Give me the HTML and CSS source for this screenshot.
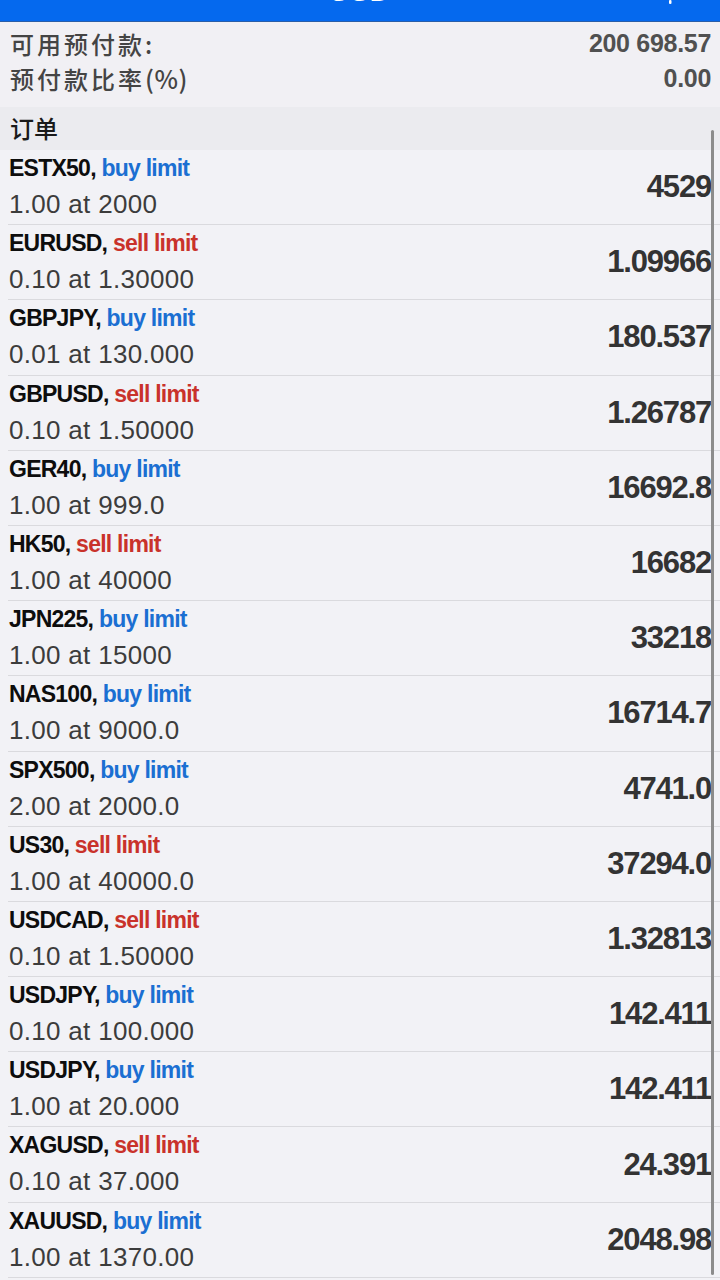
FILE: index.html
```html
<!DOCTYPE html>
<html lang="zh-CN">
<head>
<meta charset="utf-8">
<title>订单</title>
<link rel="stylesheet" href="styles.css">
</head>
<body>
<div class="screen">
  <header class="topbar">
    <span class="topbar-side"></span>
    <span class="topbar-title">USD</span>
    <span class="topbar-side topbar-right"><svg class="topbar-icon" width="6" height="8" viewBox="0 0 6 8"><rect x="2" y="0" width="2.5" height="4" rx="1" fill="#fff"/></svg></span>
  </header>

  <section class="balance">
    <div class="balance-row"><span class="balance-label">可用预付款:</span><span class="balance-value">200 698.57</span></div>
    <div class="balance-row"><span class="balance-label">预付款比率<span class="balance-unit">(%)</span></span><span class="balance-value">0.00</span></div>
  </section>

  <div class="section-head">订单</div>

  <ul class="orders">
    <li class="order"><div class="order-main"><div class="order-title">ESTX50, <span class="buy">buy limit</span></div><div class="order-sub">1.00 at 2000</div></div><div class="order-price">4529</div></li>
    <li class="order"><div class="order-main"><div class="order-title">EURUSD, <span class="sell">sell limit</span></div><div class="order-sub">0.10 at 1.30000</div></div><div class="order-price">1.09966</div></li>
    <li class="order"><div class="order-main"><div class="order-title">GBPJPY, <span class="buy">buy limit</span></div><div class="order-sub">0.01 at 130.000</div></div><div class="order-price">180.537</div></li>
    <li class="order"><div class="order-main"><div class="order-title">GBPUSD, <span class="sell">sell limit</span></div><div class="order-sub">0.10 at 1.50000</div></div><div class="order-price">1.26787</div></li>
    <li class="order"><div class="order-main"><div class="order-title">GER40, <span class="buy">buy limit</span></div><div class="order-sub">1.00 at 999.0</div></div><div class="order-price">16692.8</div></li>
    <li class="order"><div class="order-main"><div class="order-title">HK50, <span class="sell">sell limit</span></div><div class="order-sub">1.00 at 40000</div></div><div class="order-price">16682</div></li>
    <li class="order"><div class="order-main"><div class="order-title">JPN225, <span class="buy">buy limit</span></div><div class="order-sub">1.00 at 15000</div></div><div class="order-price">33218</div></li>
    <li class="order"><div class="order-main"><div class="order-title">NAS100, <span class="buy">buy limit</span></div><div class="order-sub">1.00 at 9000.0</div></div><div class="order-price">16714.7</div></li>
    <li class="order"><div class="order-main"><div class="order-title">SPX500, <span class="buy">buy limit</span></div><div class="order-sub">2.00 at 2000.0</div></div><div class="order-price">4741.0</div></li>
    <li class="order"><div class="order-main"><div class="order-title">US30, <span class="sell">sell limit</span></div><div class="order-sub">1.00 at 40000.0</div></div><div class="order-price">37294.0</div></li>
    <li class="order"><div class="order-main"><div class="order-title">USDCAD, <span class="sell">sell limit</span></div><div class="order-sub">0.10 at 1.50000</div></div><div class="order-price">1.32813</div></li>
    <li class="order"><div class="order-main"><div class="order-title">USDJPY, <span class="buy">buy limit</span></div><div class="order-sub">0.10 at 100.000</div></div><div class="order-price">142.411</div></li>
    <li class="order"><div class="order-main"><div class="order-title">USDJPY, <span class="buy">buy limit</span></div><div class="order-sub">1.00 at 20.000</div></div><div class="order-price">142.411</div></li>
    <li class="order"><div class="order-main"><div class="order-title">XAGUSD, <span class="sell">sell limit</span></div><div class="order-sub">0.10 at 37.000</div></div><div class="order-price">24.391</div></li>
    <li class="order"><div class="order-main"><div class="order-title">XAUUSD, <span class="buy">buy limit</span></div><div class="order-sub">1.00 at 1370.00</div></div><div class="order-price">2048.98</div></li>
  </ul>

  <div class="scrollbar"></div>
</div>
</body>
</html>
```
FILE: styles.css
```css
html, body {
  margin: 0;
  padding: 0;
}
body {
  background: #f2f2f6;
  font-family: "Liberation Sans", Arial, "Noto Sans CJK SC", sans-serif;
}
.screen {
  position: relative;
  width: 720px;
  height: 1280px;
  overflow: hidden;
  background: #f2f2f6;
}
.topbar {
  height: 22px;
  background: #0569ee;
  border-bottom: 1px solid #2a5ea8;
  box-sizing: border-box;
  display: grid;
  grid-template-columns: 1fr auto 1fr;
  align-items: start;
  overflow: hidden;
}
.topbar-title {
  color: #ffffff;
  font-weight: bold;
  font-size: 28px;
  line-height: 28px;
  margin-top: -22px;
  letter-spacing: 1px;
}
.topbar-right {
  display: flex;
  justify-content: flex-end;
  padding-right: 47px;
}
.topbar-icon {
  display: block;
}
.balance {
  background: #f1f0f4;
  padding: 4px 9px 11px 10px;
}
.balance-row {
  display: flex;
  justify-content: space-between;
  align-items: center;
  height: 35px;
}
.balance-label {
  font-family: "Noto Sans CJK SC", sans-serif;
  font-size: 24px;
  font-weight: 500;
  letter-spacing: 3px;
  line-height: 35px;
  color: #444444;
}
.balance-unit {
  letter-spacing: 0.5px;
  font-size: 25px;
}
.balance-value {
  font-family: "Liberation Sans", Arial, sans-serif;
  font-weight: bold;
  font-size: 25px;
  line-height: 35px;
  color: #505050;
  letter-spacing: -0.3px;
}
.section-head {
  height: 43px;
  box-sizing: border-box;
  background: #ebebef;
  padding-left: 10px;
  font-family: "Noto Sans CJK SC", sans-serif;
  font-size: 24px;
  font-weight: 500;
  line-height: 41px;
  color: #1a1a1a;
}
.orders {
  list-style: none;
  margin: 0;
  padding: 0;
}
.order {
  height: 75.2px;
  box-sizing: border-box;
  margin-left: 8px;
  padding: 0 9px 0 1px;
  border-bottom: 1px solid #dadade;
  display: flex;
  justify-content: space-between;
  align-items: center;
}
.order-main {
  display: flex;
  flex-direction: column;
  align-self: flex-start;
  padding-top: 3px;
}
.order-title {
  font-weight: bold;
  font-size: 23px;
  line-height: 31px;
  letter-spacing: -0.75px;
  color: #0d0d0d;
  white-space: nowrap;
}
.buy {
  color: #1b6fd2;
}
.sell {
  color: #c9322b;
}
.order-sub {
  font-size: 26px;
  line-height: 40px;
  letter-spacing: 0.3px;
  color: #3c3c3c;
  white-space: nowrap;
}
.order-price {
  font-weight: bold;
  font-size: 31px;
  letter-spacing: -1.2px;
  color: #333333;
  white-space: nowrap;
}
.scrollbar {
  position: absolute;
  right: 6px;
  top: 130px;
  bottom: 5px;
  width: 3px;
  border-radius: 2px;
  background: #8c8c8c;
}
```
